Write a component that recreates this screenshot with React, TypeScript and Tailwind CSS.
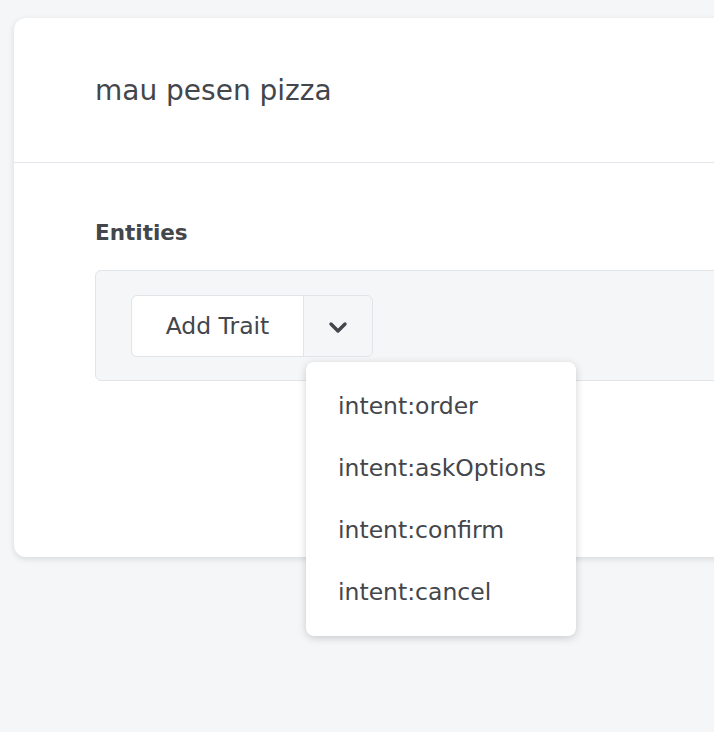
const options = ["intent:order", "intent:askOptions", "intent:confirm", "intent:cancel"];

export default function App() {
  return (
    <div className="min-h-screen w-full overflow-hidden bg-[#f5f6f8] pl-[14px] pt-[18px] font-['DejaVu_Sans',sans-serif] text-[#43464b]">
      <div className="h-[539px] w-[760px] rounded-[12px] bg-white shadow-[0_2px_6px_rgba(0,0,0,0.12)]">
        {/* Header */}
        <div className="flex h-[145px] items-center border-b border-[#e2e5e9] pl-[81px] pt-[2px]">
          <h1 className="text-[28px] leading-none">mau pesen pizza</h1>
        </div>

        {/* Entities */}
        <div className="pl-[81px] pt-[59px]">
          <h2 className="text-[21.5px] font-bold leading-none">Entities</h2>
          <div className="mt-[26px] h-[111px] rounded-l-[6px] border border-[#e2e5e8] bg-[#f5f6f8] pl-[35px] pt-[24px]">
            <div className="relative flex h-[62px] w-[242px] rounded-[6px] border border-[#e2e5e8]">
              <button className="flex w-[172px] items-center justify-center rounded-l-[6px] border-r border-[#e2e5e8] bg-white pt-[3px] text-[23.5px] leading-none">
                Add Trait
              </button>
              <button className="flex flex-1 items-center justify-center pt-[3px]">
                <svg width="20" height="14" viewBox="0 0 20 14" fill="none" stroke="#43464b" strokeWidth="3.4" strokeLinecap="round" strokeLinejoin="round">
                  <polyline points="3,4 10,11 17,4" />
                </svg>
              </button>

              {/* Dropdown menu */}
              <div className="absolute left-[174px] top-[66px] z-10 w-[270px] rounded-[8px] bg-white py-[13px] shadow-[0_2px_8px_rgba(0,0,0,0.18)]">
                {options.map((o) => (
                  <div key={o} className="flex h-[62px] items-center pl-[32px] pt-[3px] text-[23.5px] leading-none">
                    {o}
                  </div>
                ))}
              </div>
            </div>
          </div>
        </div>
      </div>
    </div>
  );
}
